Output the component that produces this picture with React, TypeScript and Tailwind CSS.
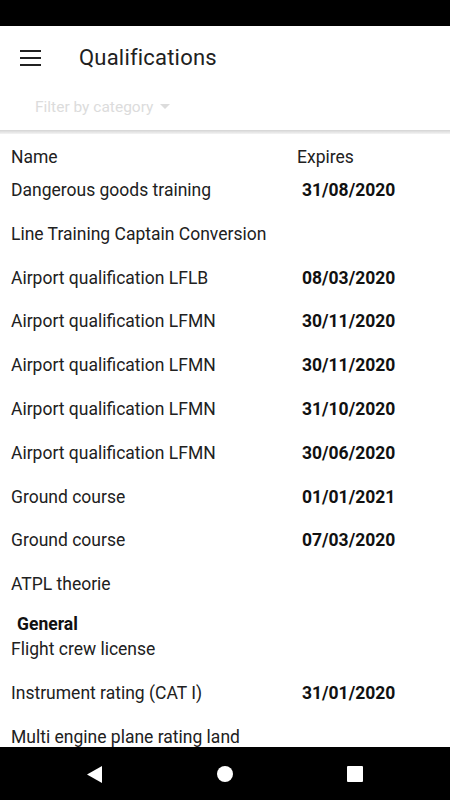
import React from "react";

type Row = { name: string; date?: string };

const rows: Row[] = [
  { name: "Dangerous goods training", date: "31/08/2020" },
  { name: "Line Training Captain Conversion" },
  { name: "Airport qualification LFLB", date: "08/03/2020" },
  { name: "Airport qualification LFMN", date: "30/11/2020" },
  { name: "Airport qualification LFMN", date: "30/11/2020" },
  { name: "Airport qualification LFMN", date: "31/10/2020" },
  { name: "Airport qualification LFMN", date: "30/06/2020" },
  { name: "Ground course", date: "01/01/2021" },
  { name: "Ground course", date: "07/03/2020" },
];

const general: Row[] = [
  { name: "Flight crew license" },
  { name: "Instrument rating (CAT I)", date: "31/01/2020" },
  { name: "Multi engine plane rating land" },
];

function QualRow({ row }: { row: Row }) {
  return (
    <div className="flex h-[43.8px] items-start">
      <div className="w-[291px] pl-[11px] text-[17.5px] leading-[24px] text-[#212121]">{row.name}</div>
      <div className="pl-[11px] text-[17.5px] leading-[24px] font-bold text-[#111]">{row.date}</div>
    </div>
  );
}

export default function App() {
  return (
    <div className="relative h-[800px] w-[450px] overflow-hidden bg-white font-['Roboto',sans-serif]">
      <div className="h-[26px] bg-black" />

      <div className="relative z-10 h-[104px] bg-white">
        <div className="flex h-[62px] items-center pt-[2px]">
          <div className="ml-[20px] flex w-[21px] flex-col gap-[5px]">
            <div className="h-[2px] bg-[#212121]" />
            <div className="h-[2px] bg-[#212121]" />
            <div className="h-[2px] bg-[#212121]" />
          </div>
          <div className="ml-[38px] text-[22px] leading-[24px] tracking-[0.2px] text-[#212121]">Qualifications</div>
        </div>
        <div className="flex items-center pl-[35px] pt-[9px]">
          <span className="text-[15.5px] leading-[20px] text-[#dcdcdc]">Filter by category</span>
          <svg className="ml-[7px]" width="10" height="6" viewBox="0 0 10 6">
            <path d="M0 0 L10 0 L5 5 Z" fill="#dcdcdc" />
          </svg>
        </div>
      </div>
      <div className="h-[4px] bg-gradient-to-b from-[#d4d4d4] to-[#f4f4f4]" />

      <div className="pt-[11px]">
        <div className="flex h-[33px] items-start">
          <div className="w-[286px] pl-[11px] text-[17.5px] leading-[24px] text-[#212121]">Name</div>
          <div className="pl-[11px] text-[17.5px] leading-[24px] text-[#212121]">Expires</div>
        </div>
        {rows.map((r, i) => (
          <QualRow key={i} row={r} />
        ))}
        <div className="flex h-[40px] items-start">
          <div className="pl-[11px] text-[17.5px] leading-[24px] text-[#212121]">ATPL theorie</div>
        </div>
        <div className="h-[25px] pl-[17px] text-[17.5px] leading-[24px] font-bold text-[#111]">General</div>
        {general.map((r, i) => (
          <QualRow key={i} row={r} />
        ))}
      </div>

      <div className="absolute bottom-0 left-0 flex h-[53px] w-full items-center bg-black">
        <div className="flex w-full items-center pt-[1px]">
          <svg className="ml-[87px]" width="16" height="17" viewBox="0 0 16 17">
            <path d="M15 0 L15 17 L0 8.5 Z" fill="#fff" />
          </svg>
          <div className="ml-[114px] h-[16px] w-[16px] rounded-full bg-white" />
          <div className="ml-[114px] h-[16px] w-[16px] rounded-[1px] bg-white" />
        </div>
      </div>
    </div>
  );
}
